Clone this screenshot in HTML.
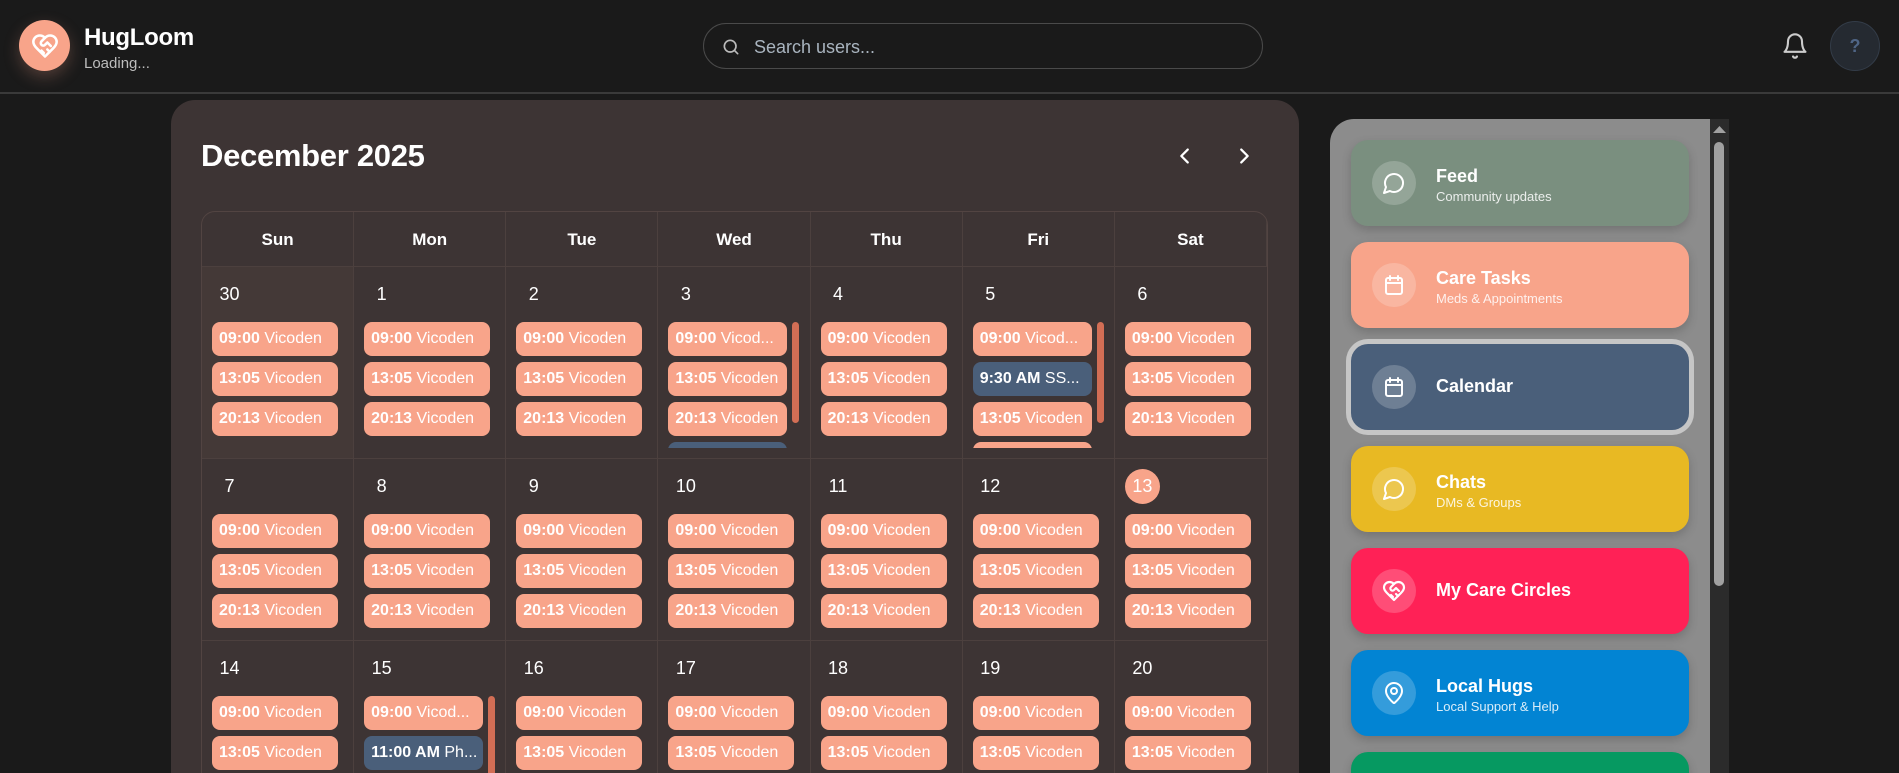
<!DOCTYPE html>
<html style="width:1899px;height:773px;overflow:hidden"><head><meta charset="utf-8"><style>
*{box-sizing:border-box;margin:0;padding:0}
body{width:1899px;height:773px;overflow:hidden;background:#1a1a1a;font-family:"Liberation Sans",Arial,sans-serif;color:#fff;position:relative}
.hdr{position:absolute;left:0;top:0;width:1899px;height:94px;border-bottom:2px solid #3a3a3a;background:#1a1a1a}
.logo{position:absolute;left:19px;top:20px;width:51px;height:51px;border-radius:50%;background:#f8a48a;box-shadow:0 6px 16px rgba(248,164,138,.25);display:flex;align-items:center;justify-content:center}
.brand{position:absolute;left:84px;top:24px;font-size:24px;font-weight:bold;letter-spacing:-.3px}
.load{position:absolute;left:84px;top:55px;font-size:15px;color:#bdbdbd}
.search{position:absolute;left:703px;top:23px;width:560px;height:46px;border:1px solid #4a4a4a;border-radius:23px}
.search span{position:absolute;left:50px;top:13px;font-size:18px;color:#a9b4bf}
.help{position:absolute;left:1830px;top:21px;width:50px;height:50px;border-radius:50%;background:#252a31;border:1px solid #333c48;color:#4f6585;font-weight:bold;font-size:18px;text-align:center;line-height:48px}
.cal{position:absolute;left:171px;top:100px;width:1128px;height:673px;background:#3d3434;border-radius:24px 24px 0 0;overflow:hidden}
.title{position:absolute;left:30px;top:38px;font-size:31px;font-weight:bold;letter-spacing:-.3px}
.grid{position:absolute;left:30px;top:111px;width:1067px;border:1px solid #524442;border-radius:14px 14px 0 0;display:grid;grid-template-columns:repeat(7,1fr);overflow:hidden}
.dh{height:55px;border-right:1px solid #4c403e;border-bottom:1px solid #4c403e;text-align:center;font-weight:bold;font-size:17px;line-height:55px}
.c{border-right:1px solid #4c403e;border-bottom:1px solid #4c403e;position:relative;padding:10px 0 0 10px}
.c:nth-child(7n){border-right:0}
.r1{height:192px}.r2{height:182px}.r3{height:200px}
.n{width:35px;height:35px;line-height:35px;text-align:center;font-size:18px;margin-bottom:10px}
.today{background:#f8a48a;border-radius:50%}
.ev{width:126px;height:34px;line-height:34px;border-radius:8px;background:#f8a48a;font-size:16px;padding:0 7px;margin-bottom:6px;white-space:nowrap;overflow:hidden}
.ev b{font-weight:bold}
.bl{background:#4a5f7a}
.sc{height:126px;overflow:hidden;position:relative;width:138px}
.sc .ev{width:119px}
.sc:after{content:"";position:absolute;left:124px;top:0;width:7px;height:101px;border-radius:4px;background:#d26e55}
.side{position:absolute;left:1330px;top:119px;width:380px;height:654px;background:#8c8c8c;border-radius:24px 0 0 0;overflow:hidden}
.track{position:absolute;left:1710px;top:119px;width:19px;height:654px;background:#2b2b2b}
.thumb{position:absolute;left:1714px;top:142px;width:10px;height:444px;border-radius:5px;background:#a0a0a0}
.card{position:absolute;left:21px;width:338px;height:86px;border-radius:17px;box-shadow:0 4px 10px rgba(0,0,0,.18)}
.ic{position:absolute;left:21px;top:21px;width:44px;height:44px;border-radius:50%;background:rgba(255,255,255,.2);display:flex;align-items:center;justify-content:center}
.ct{position:absolute;left:85px;top:26px;font-size:18px;font-weight:bold}
.cs{position:absolute;left:85px;top:49px;font-size:13px;color:rgba(255,255,255,.85)}
.one{top:32px}
</style></head><body>
<div class="hdr">
 <div class="logo"><svg width="28" height="28" viewBox="0 0 24 24" fill="none" stroke="#fff" stroke-width="2.2" stroke-linecap="round" stroke-linejoin="round"><path d="M19 14c1.5-1.5 3-3.2 3-5.5A5.5 5.5 0 0 0 16.5 3c-1.8 0-3 .5-4.5 2-1.5-1.5-2.7-2-4.5-2A5.5 5.5 0 0 0 2 8.5c0 2.3 1.5 4 3 5.5l7 7Z"/><path d="M12 5 9 8a2.1 2.1 0 0 0 3 3l2-2 3 3M14 15l2 2M11 18l-2-2"/></svg></div>
 <div class="brand">HugLoom</div><div class="load">Loading...</div>
 <div class="search"><svg style="position:absolute;left:17px;top:13px" width="20" height="20" viewBox="0 0 24 24" fill="none" stroke="#bbb" stroke-width="2" stroke-linecap="round"><circle cx="11" cy="11" r="7"/><path d="m20 20-4-4"/></svg><span>Search users...</span></div>
 <svg style="position:absolute;left:1781px;top:31px" width="28" height="30" viewBox="0 0 24 24" fill="none" stroke="#ccc" stroke-width="1.8" stroke-linecap="round" stroke-linejoin="round"><path d="M6 8a6 6 0 0 1 12 0c0 7 3 9 3 9H3s3-2 3-9"/><path d="M10.3 21a1.9 1.9 0 0 0 3.4 0"/></svg>
 <div class="help">?</div>
</div>
<div class="cal">
 <div class="title">December 2025</div>
 <svg style="position:absolute;left:1003px;top:45px" width="22" height="22" viewBox="0 0 24 24" fill="none" stroke="#fff" stroke-width="2.5" stroke-linecap="round" stroke-linejoin="round"><path d="m15 5-7 7 7 7"/></svg>
 <svg style="position:absolute;left:1062px;top:45px" width="22" height="22" viewBox="0 0 24 24" fill="none" stroke="#fff" stroke-width="2.5" stroke-linecap="round" stroke-linejoin="round"><path d="m9 5 7 7-7 7"/></svg>
 <div class="grid">
  <div class="dh">Sun</div><div class="dh">Mon</div><div class="dh">Tue</div><div class="dh">Wed</div><div class="dh">Thu</div><div class="dh">Fri</div><div class="dh">Sat</div>
  <div class="c r1" style="background:#443937"><div class="n">30</div><div class="ev"><b>09:00</b> Vicoden</div><div class="ev"><b>13:05</b> Vicoden</div><div class="ev"><b>20:13</b> Vicoden</div></div>
  <div class="c r1"><div class="n">1</div><div class="ev"><b>09:00</b> Vicoden</div><div class="ev"><b>13:05</b> Vicoden</div><div class="ev"><b>20:13</b> Vicoden</div></div>
  <div class="c r1"><div class="n">2</div><div class="ev"><b>09:00</b> Vicoden</div><div class="ev"><b>13:05</b> Vicoden</div><div class="ev"><b>20:13</b> Vicoden</div></div>
  <div class="c r1"><div class="n">3</div><div class="sc"><div class="ev"><b>09:00</b> Vicod...</div><div class="ev"><b>13:05</b> Vicoden</div><div class="ev"><b>20:13</b> Vicoden</div><div class="ev bl"></div></div></div>
  <div class="c r1"><div class="n">4</div><div class="ev"><b>09:00</b> Vicoden</div><div class="ev"><b>13:05</b> Vicoden</div><div class="ev"><b>20:13</b> Vicoden</div></div>
  <div class="c r1"><div class="n">5</div><div class="sc"><div class="ev"><b>09:00</b> Vicod...</div><div class="ev bl"><b>9:30 AM</b> SS...</div><div class="ev"><b>13:05</b> Vicoden</div><div class="ev"></div></div></div>
  <div class="c r1"><div class="n">6</div><div class="ev"><b>09:00</b> Vicoden</div><div class="ev"><b>13:05</b> Vicoden</div><div class="ev"><b>20:13</b> Vicoden</div></div>
  <div class="c r2"><div class="n">7</div><div class="ev"><b>09:00</b> Vicoden</div><div class="ev"><b>13:05</b> Vicoden</div><div class="ev"><b>20:13</b> Vicoden</div></div>
  <div class="c r2"><div class="n">8</div><div class="ev"><b>09:00</b> Vicoden</div><div class="ev"><b>13:05</b> Vicoden</div><div class="ev"><b>20:13</b> Vicoden</div></div>
  <div class="c r2"><div class="n">9</div><div class="ev"><b>09:00</b> Vicoden</div><div class="ev"><b>13:05</b> Vicoden</div><div class="ev"><b>20:13</b> Vicoden</div></div>
  <div class="c r2"><div class="n">10</div><div class="ev"><b>09:00</b> Vicoden</div><div class="ev"><b>13:05</b> Vicoden</div><div class="ev"><b>20:13</b> Vicoden</div></div>
  <div class="c r2"><div class="n">11</div><div class="ev"><b>09:00</b> Vicoden</div><div class="ev"><b>13:05</b> Vicoden</div><div class="ev"><b>20:13</b> Vicoden</div></div>
  <div class="c r2"><div class="n">12</div><div class="ev"><b>09:00</b> Vicoden</div><div class="ev"><b>13:05</b> Vicoden</div><div class="ev"><b>20:13</b> Vicoden</div></div>
  <div class="c r2"><div class="n today">13</div><div class="ev"><b>09:00</b> Vicoden</div><div class="ev"><b>13:05</b> Vicoden</div><div class="ev"><b>20:13</b> Vicoden</div></div>
  <div class="c r3"><div class="n">14</div><div class="ev"><b>09:00</b> Vicoden</div><div class="ev"><b>13:05</b> Vicoden</div></div>
  <div class="c r3"><div class="n">15</div><div class="sc"><div class="ev"><b>09:00</b> Vicod...</div><div class="ev bl"><b>11:00 AM</b> Ph...</div><div class="ev"></div></div></div>
  <div class="c r3"><div class="n">16</div><div class="ev"><b>09:00</b> Vicoden</div><div class="ev"><b>13:05</b> Vicoden</div></div>
  <div class="c r3"><div class="n">17</div><div class="ev"><b>09:00</b> Vicoden</div><div class="ev"><b>13:05</b> Vicoden</div></div>
  <div class="c r3"><div class="n">18</div><div class="ev"><b>09:00</b> Vicoden</div><div class="ev"><b>13:05</b> Vicoden</div></div>
  <div class="c r3"><div class="n">19</div><div class="ev"><b>09:00</b> Vicoden</div><div class="ev"><b>13:05</b> Vicoden</div></div>
  <div class="c r3"><div class="n">20</div><div class="ev"><b>09:00</b> Vicoden</div><div class="ev"><b>13:05</b> Vicoden</div></div>
 </div>
</div>
<div class="side">
<div class="card" style="top:21px;background:#7a8f7f"><div class="ic"><svg width="24" height="24" viewBox="0 0 24 24" fill="none" stroke="#fff" stroke-width="2" stroke-linecap="round" stroke-linejoin="round"><path d="M7.9 20A9 9 0 1 0 4 16.1L2 22Z"/></svg></div><div class="ct">Feed</div><div class="cs">Community updates</div></div>
<div class="card" style="top:123px;background:#f8a48a"><div class="ic"><svg width="24" height="24" viewBox="0 0 24 24" fill="none" stroke="#fff" stroke-width="2" stroke-linecap="round"><rect x="4" y="5" width="16" height="16" rx="2"/><path d="M8 3v4M16 3v4M4 10h16"/></svg></div><div class="ct">Care Tasks</div><div class="cs">Meds &amp; Appointments</div></div>
<div class="card" style="top:225px;background:#4a5f7a;box-shadow:0 0 0 5px #c6c6c6"><div class="ic"><svg width="24" height="24" viewBox="0 0 24 24" fill="none" stroke="#fff" stroke-width="2" stroke-linecap="round"><rect x="4" y="5" width="16" height="16" rx="2"/><path d="M8 3v4M16 3v4M4 10h16"/></svg></div><div class="ct one">Calendar</div></div>
<div class="card" style="top:327px;background:#e8b923"><div class="ic"><svg width="24" height="24" viewBox="0 0 24 24" fill="none" stroke="#fff" stroke-width="2" stroke-linecap="round" stroke-linejoin="round"><path d="M7.9 20A9 9 0 1 0 4 16.1L2 22Z"/></svg></div><div class="ct">Chats</div><div class="cs">DMs &amp; Groups</div></div>
<div class="card" style="top:429px;background:#ff2156"><div class="ic"><svg width="24" height="24" viewBox="0 0 24 24" fill="none" stroke="#fff" stroke-width="2.2" stroke-linecap="round" stroke-linejoin="round"><path d="M19 14c1.5-1.5 3-3.2 3-5.5A5.5 5.5 0 0 0 16.5 3c-1.8 0-3 .5-4.5 2-1.5-1.5-2.7-2-4.5-2A5.5 5.5 0 0 0 2 8.5c0 2.3 1.5 4 3 5.5l7 7Z"/><path d="M12 5 9 8a2.1 2.1 0 0 0 3 3l2-2 3 3M14 15l2 2M11 18l-2-2"/></svg></div><div class="ct one">My Care Circles</div></div>
<div class="card" style="top:531px;background:#0284d3"><div class="ic"><svg width="24" height="24" viewBox="0 0 24 24" fill="none" stroke="#fff" stroke-width="2" stroke-linecap="round" stroke-linejoin="round"><path d="M20 10c0 5-5.5 10.2-7.4 11.8a1 1 0 0 1-1.2 0C9.5 20.2 4 15 4 10a8 8 0 0 1 16 0"/><circle cx="12" cy="10" r="3"/></svg></div><div class="ct">Local Hugs</div><div class="cs">Local Support &amp; Help</div></div>
<div class="card" style="top:633px;background:#069961"></div>
</div>
<div class="track"></div><div class="thumb"></div>
<svg style="position:absolute;left:1713px;top:125px" width="13" height="8" viewBox="0 0 13 8"><path d="M0 8 6.5 1 13 8Z" fill="#a0a0a0"/></svg>
</body></html>
